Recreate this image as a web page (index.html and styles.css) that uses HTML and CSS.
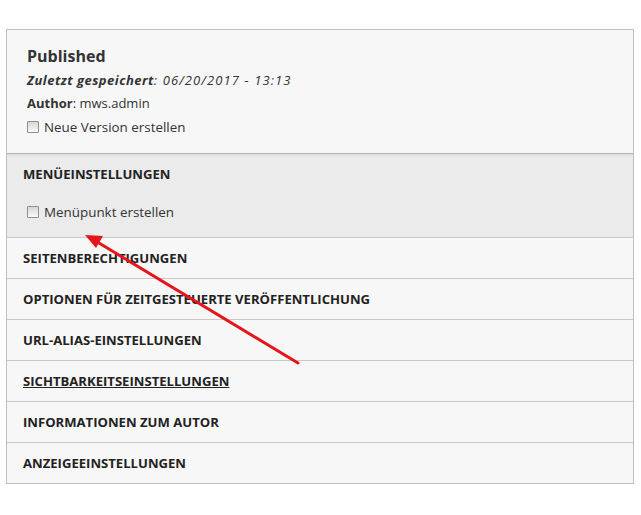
FILE: index.html
```html
<!DOCTYPE html>
<html lang="de">
<head>
    <meta charset="UTF-8">
    <title>Inhalt bearbeiten</title>
    <link rel="stylesheet" href="styles.css">
</head>
<body>
    <div class="sidebar">
        <div class="meta">
            <h3>Published</h3>
            <p class="saved"><b>Zuletzt gespeichert</b>: 06/20/2017 - 13:13</p>
            <p class="author"><b>Author</b>: mws.admin</p>
            <label class="check"><span class="box"></span>Neue Version erstellen</label>
        </div>
        <div class="section open">
            <div class="summary">Menüeinstellungen</div>
            <label class="check"><span class="box"></span>Menüpunkt erstellen</label>
        </div>
        <div class="section"><div class="summary">Seitenberechtigungen</div></div>
        <div class="section"><div class="summary">Optionen für zeitgesteuerte Veröffentlichung</div></div>
        <div class="section"><div class="summary">URL-Alias-Einstellungen</div></div>
        <div class="section"><div class="summary linked">Sichtbarkeitseinstellungen</div></div>
        <div class="section"><div class="summary">Informationen zum Autor</div></div>
        <div class="section"><div class="summary">Anzeigeeinstellungen</div></div>

        <svg class="arrow" width="641" height="515" viewBox="0 0 641 515">
            <line x1="298" y1="363" x2="94" y2="240" stroke="#e5161b" stroke-width="3" stroke-linecap="round"/>
            <polygon points="85,235 103,236 96,248" fill="#e5161b"/>
        </svg>
    </div>
</body>
</html>
```

FILE: styles.css
```css
body {
    margin: 0;
    padding: 29px 7px 0 6px;
    font-family: "Open Sans", Arial, sans-serif;
    color: #333;
    background: #fff;
}
.sidebar {
    width: 626px;
    border: 1px solid #bfbfbf;
    background-color: #f7f7f7;
}
.meta {
    padding: 15px 20px 15px 20px;
    height: 93px;
}
.meta h3 {
    margin: 0 0 2px;
    font-size: 16px;
    font-weight: 700;
    color: #333;
    line-height: 22px;
}
.meta p {
    margin: 0;
    font-size: 13px;
    line-height: 23px;
    color: #333;
}
.meta .saved {
    font-style: italic;
    letter-spacing: 1.1px;
}
.meta .saved b {
    letter-spacing: 0.5px;
}
.check {
    display: flex;
    align-items: center;
    font-size: 13.4px;
    line-height: 24px;
    color: #333;
}
.box {
    width: 10px;
    height: 10px;
    margin-right: 5px;
    border: 1px solid #8f8f8f;
    background: linear-gradient(#d6d6d6, #fafafa);
    border-radius: 1px;
}
.section {
    border-top: 1px solid #c9c9c9;
    height: 40px;
}
.section.open {
    height: 83px;
    background-color: #ebebeb;
    border-top: 1px solid #b5b5b5;
    box-shadow: inset 0 2px 2px rgba(0, 0, 0, 0.05);
}
.section.open .summary {
    line-height: 41px;
}
.section.open .check {
    padding: 0 20px;
    margin-top: 5px;
}
.summary {
    padding: 0 16px;
    line-height: 40px;
    font-size: 13.1px;
    font-weight: 700;
    text-transform: uppercase;
    color: #222;
}
.summary.linked {
    text-decoration: underline;
}
.arrow {
    position: absolute;
    top: 0;
    left: 0;
    pointer-events: none;
}
```
